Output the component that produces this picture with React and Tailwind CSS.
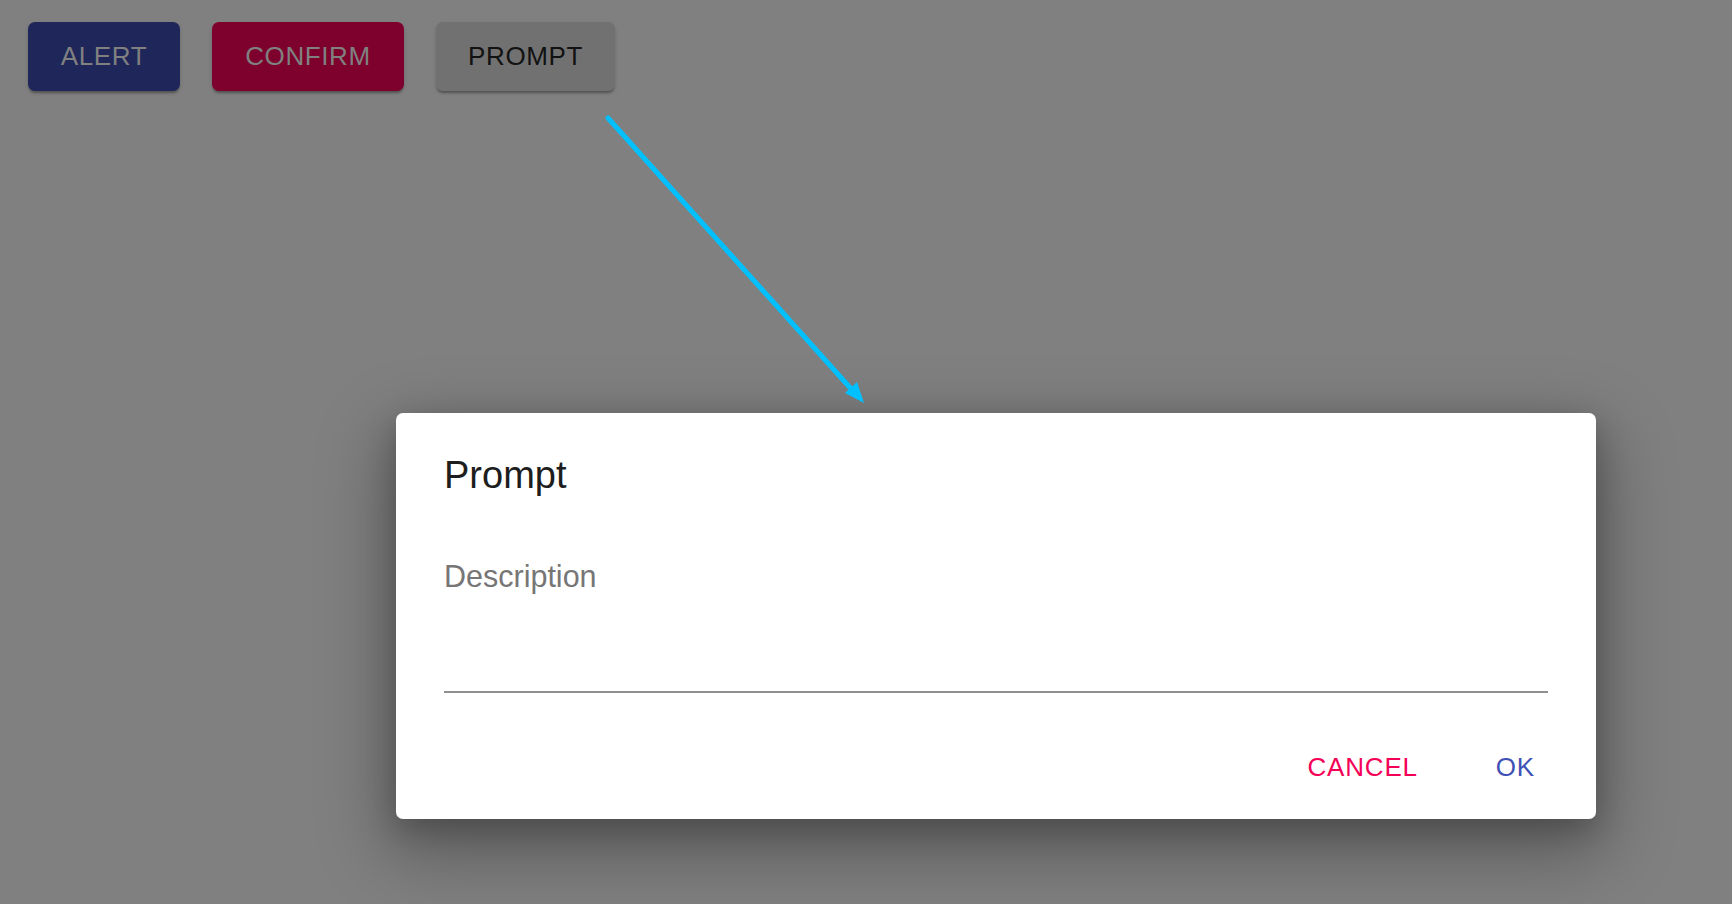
import React from 'react';

const font = { fontFamily: '"Liberation Sans", Arial, sans-serif' };

function PageButton({ label, className }) {
  return (
    <button
      className={`h-[69px] pb-[2px] rounded-[7px] flex items-center justify-center text-[26px] leading-[26px] tracking-[0.6px] shadow-[0_3px_2px_-1px_rgba(0,0,0,0.25),0_2px_4px_0_rgba(0,0,0,0.15)] ${className}`}
    >
      {label}
    </button>
  );
}

export default function App() {
  return (
    <div className="relative w-full h-[904px] bg-[#808080] overflow-hidden" style={font}>
      {/* top buttons, dimmed by the backdrop */}
      <div className="flex gap-[32px] pl-[28px] pt-[22px]">
        <PageButton label="ALERT" className="w-[152px] bg-[#1f265a] text-[#808080]" />
        <PageButton label="CONFIRM" className="w-[192px] bg-[#7d002d] text-[#808080]" />
        <PageButton label="PROMPT" className="w-[179px] bg-[#717171] text-[#121212]" />
      </div>

      {/* dialog */}
      <div className="flex pl-[396px] pt-[322px]">
        <div className="w-[1200px] bg-white rounded-[7px] pt-[44px] px-[48px] pb-[39px] shadow-[0_26px_70px_10px_rgba(0,0,0,0.3),0_10px_30px_0_rgba(0,0,0,0.2)]">
          <div className="h-[37px] text-[38px] leading-[37px] text-[#1d1d1d]">Prompt</div>
          <div className="mt-[67px] text-[30.5px] leading-[30px] text-[#767676]">Description</div>
          <div className="mt-[100px] border-b-2 border-[#8f8f8f]" />
          <div className="mt-[61px] flex justify-end gap-[78px] pr-[13px] text-[26px] leading-[26px] tracking-[0.8px]">
            <span className="text-[#f50057]">CANCEL</span>
            <span className="text-[#3f51b5]">OK</span>
          </div>
        </div>
      </div>

      {/* annotation arrow */}
      <svg className="absolute inset-0 pointer-events-none" width="1732" height="904">
        <line x1="608" y1="118" x2="853" y2="391" stroke="#00c0ff" strokeWidth="5" strokeLinecap="round" />
        <polygon points="864,403 845,393 857,382" fill="#00c0ff" />
      </svg>
    </div>
  );
}
